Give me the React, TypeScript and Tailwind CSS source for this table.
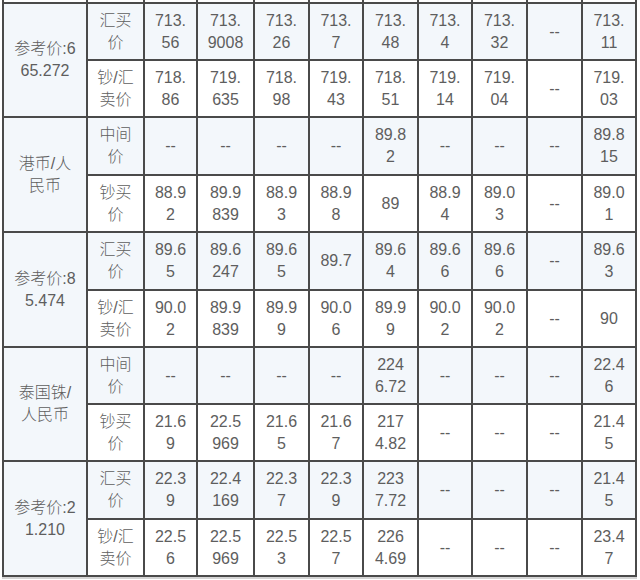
type Row = { kind: string; values: string[] };
type Group = { label: string; rows: Row[] };

const groups: Group[] = [
  {
    label: "参考价:6\n65.272",
    rows: [
      { kind: "汇买\n价", values: ["713.\n56", "713.\n9008", "713.\n26", "713.\n7", "713.\n48", "713.\n4", "713.\n32", "--", "713.\n11"] },
      { kind: "钞/汇\n卖价", values: ["718.\n86", "719.\n635", "718.\n98", "719.\n43", "718.\n51", "719.\n14", "719.\n04", "--", "719.\n03"] },
    ],
  },
  {
    label: "港币/人\n民币",
    rows: [
      { kind: "中间\n价", values: ["--", "--", "--", "--", "89.8\n2", "--", "--", "--", "89.8\n15"] },
      { kind: "钞买\n价", values: ["88.9\n2", "89.9\n839", "88.9\n3", "88.9\n8", "89", "88.9\n4", "89.0\n3", "--", "89.0\n1"] },
    ],
  },
  {
    label: "参考价:8\n5.474",
    rows: [
      { kind: "汇买\n价", values: ["89.6\n5", "89.6\n247", "89.6\n5", "89.7", "89.6\n4", "89.6\n6", "89.6\n6", "--", "89.6\n3"] },
      { kind: "钞/汇\n卖价", values: ["90.0\n2", "89.9\n839", "89.9\n9", "90.0\n6", "89.9\n9", "90.0\n2", "90.0\n2", "--", "90"] },
    ],
  },
  {
    label: "泰国铢/\n人民币",
    rows: [
      { kind: "中间\n价", values: ["--", "--", "--", "--", "224\n6.72", "--", "--", "--", "22.4\n6"] },
      { kind: "钞买\n价", values: ["21.6\n9", "22.5\n969", "21.6\n5", "21.6\n7", "217\n4.82", "--", "--", "--", "21.4\n5"] },
    ],
  },
  {
    label: "参考价:2\n1.210",
    rows: [
      { kind: "汇买\n价", values: ["22.3\n9", "22.4\n169", "22.3\n7", "22.3\n9", "223\n7.72", "--", "--", "--", "21.4\n5"] },
      { kind: "钞/汇\n卖价", values: ["22.5\n6", "22.5\n969", "22.5\n3", "22.5\n7", "226\n4.69", "--", "--", "--", "23.4\n7"] },
    ],
  },
];

// row heights follow the screenshot's grid lines
const heights = ["h-[57px]", "h-[57px]", "h-[58px]", "h-[57px]", "h-[58px]", "h-[57px]", "h-[57px]", "h-[57px]", "h-[58px]", "h-[57px]"];

const cell = "border-2 border-[#4a4a4a] p-0 text-center align-middle whitespace-pre-line";

export default function App() {
  return (
    <div className="w-[640px] h-[580px] overflow-hidden bg-white">
      <table
        className="ml-[2px] w-[635px] table-fixed border-collapse text-[16px] leading-[22px] font-light text-[#5e5e5e] shadow-[0_2px_0_#d4d4d4]"
        style={{ fontFamily: '"Liberation Sans", "Noto Sans CJK SC", sans-serif' }}
      >
        <colgroup>
          <col className="w-[84px]" />
          <col className="w-[57px]" />
          <col className="w-[53px]" />
          <col className="w-[57px]" />
          <col className="w-[55px]" />
          <col className="w-[54px]" />
          <col className="w-[55px]" />
          <col className="w-[54px]" />
          <col className="w-[55px]" />
          <col className="w-[55px]" />
          <col className="w-[54px]" />
        </colgroup>
        <tbody>
          <tr className="h-[3px]">
            {Array.from({ length: 11 }).map((_, i) => (
              <td key={i} className="border-x-2 border-b-2 border-[#4a4a4a] p-0" />
            ))}
          </tr>
          {groups.map((g, gi) =>
            g.rows.map((r, ri) => {
              const idx = gi * 2 + ri;
              const bg = ri === 0 ? "bg-[#f3f7fb]" : "bg-white";
              return (
                <tr key={idx} className={`${heights[idx]} ${bg}`}>
                  {ri === 0 && (
                    <td rowSpan={2} className={`${cell} bg-[#f3f7fb]`}>
                      {g.label}
                    </td>
                  )}
                  <td className={cell}>{r.kind}</td>
                  {r.values.map((v, vi) => (
                    <td key={vi} className={cell}>
                      {v}
                    </td>
                  ))}
                </tr>
              );
            })
          )}
        </tbody>
      </table>
    </div>
  );
}
